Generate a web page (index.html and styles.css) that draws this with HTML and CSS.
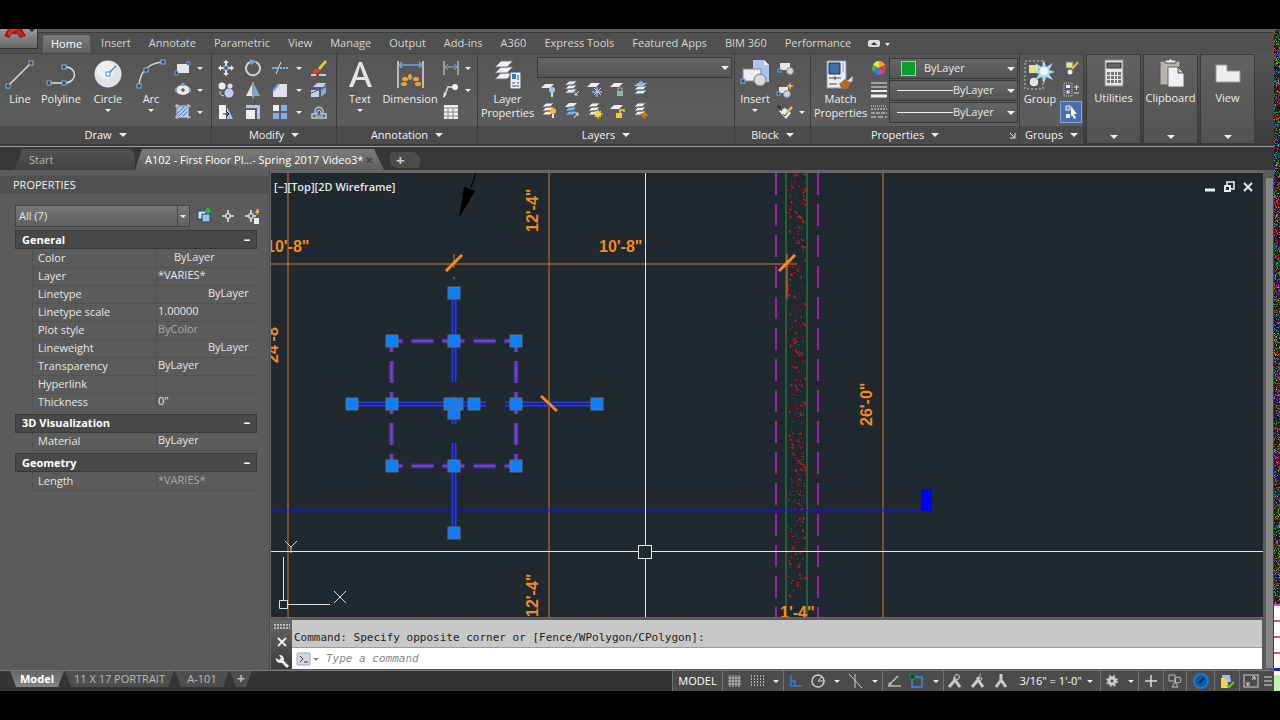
FILE: index.html
```html
<!DOCTYPE html>
<html lang="en">
<head>
<meta charset="utf-8">
<title>A102 - First Floor Plan</title>
<link rel="stylesheet" href="styles.css">
</head>
<body>
<div class="screen">
<div class="app">
  <header class="titlebar">
    <button class="logo" aria-label="Application menu"><svg width="38" height="20" viewBox="0 0 38 20"><path d="M4 7 8 0h14l4 7-6 2-3-4h-5l-3 4z" fill="#a31515"/><path d="M7 6 10 0h8l-5 3-4 4z" fill="#d8322e"/><path d="m19 0 5 6-4 1-4-4z" fill="#cf2525"/><path d="m29 0 3 3 3-3z" fill="#222"/></svg></button>
  </header>
  <nav class="tabs">
    <button class="tab on">Home</button><button class="tab">Insert</button><button class="tab">Annotate</button><button class="tab">Parametric</button><button class="tab">View</button><button class="tab">Manage</button><button class="tab">Output</button><button class="tab">Add-ins</button><button class="tab">A360</button><button class="tab">Express Tools</button><button class="tab">Featured Apps</button><button class="tab">BIM 360</button><button class="tab">Performance</button>
    <button class="mini" aria-label="Minimize ribbon"><svg width="22" height="10" viewBox="0 0 22 10"><rect y="1" width="12" height="7" rx="2" fill="#ddd"/><path d="m3 6 3-3 3 3z" fill="#333"/><path d="M17 4h5l-2.500 3z" fill="#eee"/></svg></button>
  </nav>

  <div class="ribbon">
    <section class="panel draw">
      <div class="tools">
        <button class="big w40"><svg width="34" height="32" viewBox="0 0 34 32"><path d="M5 27 28 4" stroke="#ddd" stroke-width="1.500"/><g fill="#345" stroke="#7fb2f0"><rect x="3" y="25" width="4" height="4"/><rect x="26" y="2" width="4" height="4"/></g></svg><span>Line</span></button>
        <button class="big w42"><svg width="34" height="32" viewBox="0 0 34 32"><path d="M5 24h15c14 0 14-17 0-16" fill="none" stroke="#ddd" stroke-width="1.500"/><g fill="#345" stroke="#7fb2f0"><rect x="3" y="22" width="4" height="4"/><rect x="18" y="22" width="4" height="4"/><rect x="18" y="6" width="4" height="4"/></g></svg><span>Polyline</span></button>
        <button class="big w52"><svg width="34" height="32" viewBox="0 0 34 32"><circle cx="17" cy="15" r="13.500" fill="#dfe2e8"/><circle cx="15" cy="11" r="9" fill="#eceef2"/><path d="m17 15 8-8" stroke="#4a80d0" stroke-width="1.500"/><rect x="15" y="13" width="4" height="4" fill="#fff" stroke="#4a90e8"/></svg><span>Circle</span><i class="arr"></i></button>
        <button class="big w34"><svg width="34" height="32" viewBox="0 0 34 32"><path d="M5 27C6 12 15 4 29 3" fill="none" stroke="#ddd" stroke-width="1.500"/><g fill="#345" stroke="#7fb2f0"><rect x="3" y="25" width="4" height="4"/><rect x="10" y="9" width="4" height="4"/><rect x="27" y="1" width="4" height="4"/></g></svg><span>Arc</span><i class="arr"></i></button>
        <div class="grid g-drop">
          <button class="sm" aria-label="Rectangle"><svg width="18" height="18" viewBox="0 0 18 18"><rect x="3" y="5" width="12" height="9" fill="#e6e7ea"/><path d="M1 12h3v4H1zM13 3h3v3h-3z" fill="#345" stroke="#6fa5e8"/></svg></button><button class="dd" aria-label="Rectangle options"><i class="arr"></i></button>
          <button class="sm" aria-label="Ellipse"><svg width="18" height="18" viewBox="0 0 18 18"><ellipse cx="9" cy="9" rx="7" ry="5" fill="#e6e7ea"/><path d="M7 9h4M9 7v4" stroke="#333"/><path d="M1 9h2M15 9h2M9 2v3" stroke="#6fa5e8" stroke-width="3"/></svg></button><button class="dd" aria-label="Ellipse options"><i class="arr"></i></button>
          <button class="sm" aria-label="Hatch"><svg width="18" height="18" viewBox="0 0 18 18"><rect x="4" y="4" width="10" height="10" fill="#a9c7f2"/><path d="m4 10 6-6M4 14 14 4M8 14l6-6" stroke="#4f7fc8"/><path d="M1 3h16M1 14h16M3 1v15M14 1v15" stroke="#ddd"/></svg></button><button class="dd" aria-label="Hatch options"><i class="arr"></i></button>
        </div>
      </div>
      <button class="ptitle">Draw<i class="arr lg"></i></button>
    </section>

    <section class="panel modify">
      <div class="tools">
        <div class="grid g-mod">
          <button class="sm" aria-label="Move"><svg width="18" height="18" viewBox="0 0 18 18"><path d="m9 1 3 3H6zM9 17l3-3H6zM1 9l3-3v6zM17 9l-3-3v6z" fill="#d5e5fa"/><path d="M9 4v10M4 9h10" stroke="#dce6f5" stroke-width="2"/><rect x="7" y="7" width="4" height="4" fill="#555" stroke="#7fb0f0"/></svg></button>
          <button class="sm" aria-label="Rotate"><svg width="18" height="18" viewBox="0 0 18 18"><path d="M12 3a7 7 0 1 1-6 0" fill="none" stroke="#cfd2d8" stroke-width="2"/><path d="M6 3c2-1 4-1 6 0" stroke="#6fa5e8" stroke-width="2" fill="none"/><path d="m6 0 6 3-5 3z" fill="#6fa5e8"/></svg></button>
          <button class="sm" aria-label="Trim"><svg width="18" height="18" viewBox="0 0 18 18"><path d="M1 9h6" stroke="#6fa5e8" stroke-width="2"/><path d="M9 9h8" stroke="#8fb5e8" stroke-width="2" stroke-dasharray="2 1"/><path d="m5 15 5-12" stroke="#ddd"/></svg></button><button class="dd" aria-label="Trim options"><i class="arr"></i></button>
          <button class="sm" aria-label="Erase"><svg width="18" height="18" viewBox="0 0 18 18"><path d="m8 9 7-8 2 2-7 8z" fill="#f1c33a"/><path d="m6 9 4 3-5 3-3-1z" fill="#e5402a"/><path d="M1 16h5M9 16h7" stroke="#eee" stroke-width="1.500"/></svg></button>
          <button class="sm" aria-label="Copy"><svg width="18" height="18" viewBox="0 0 18 18"><circle cx="5" cy="5" r="3.500" fill="#eee"/><circle cx="12" cy="12" r="4.500" fill="#b9d2f5"/><circle cx="13" cy="5" r="2.500" fill="#ddd"/><path d="M3 10c0 4 1 4 4 5" stroke="#ddd" fill="none"/></svg></button>
          <button class="sm" aria-label="Mirror"><svg width="18" height="18" viewBox="0 0 18 18"><path d="M8 3v12H2z" fill="#e6e7ea"/><path d="M10 3v12h6z" fill="#7fa8dd"/><path d="M9 1v16" stroke="#ddd"/></svg></button>
          <button class="sm" aria-label="Fillet"><svg width="18" height="18" viewBox="0 0 18 18"><path d="M2 16V9l5-6h9v13z" fill="#dfe2e8"/><path d="M2 10 8 3" stroke="#6fa5e8" stroke-width="2"/></svg></button><button class="dd" aria-label="Fillet options"><i class="arr"></i></button>
          <button class="sm" aria-label="Explode"><svg width="18" height="18" viewBox="0 0 18 18"><path d="m3 6 4-4h9l-3 4zM1 9h8v7H1z" fill="#b9d2f5"/><path d="m11 8 5-4v8l-5 4z" fill="#7fa8dd"/><path d="m1 12 15-6" stroke="#555"/></svg></button>
          <button class="sm" aria-label="Stretch"><svg width="18" height="18" viewBox="0 0 18 18"><path d="M2 2h7v14H2z" fill="#f0f1f3"/><path d="m10 4 6 12h-6z" fill="#9fc3f5"/><path d="M6 11h6m-3-3 3 3-3 3" stroke="#222" fill="none"/></svg></button>
          <button class="sm" aria-label="Scale"><svg width="18" height="18" viewBox="0 0 18 18"><path d="M2 2h14v14h-3V5H2z" fill="#a9c7f2"/><rect x="2" y="7" width="9" height="9" fill="#eee"/></svg></button>
          <button class="sm" aria-label="Array"><svg width="18" height="18" viewBox="0 0 18 18"><rect x="2" y="2" width="6" height="6" fill="#eee"/><path d="M10 2h6v6h-6zM2 10h6v6H2zM10 10h6v6h-6z" fill="#7fb0f0"/></svg></button><button class="dd" aria-label="Array options"><i class="arr"></i></button>
          <button class="sm" aria-label="Offset"><svg width="18" height="18" viewBox="0 0 18 18"><path d="M2 15v-4h4a4 4 0 1 1 6 0h4v4z" fill="none" stroke="#a9c7f2" stroke-width="1.500"/><path d="M5 13h8M8 11a2 2 0 1 1 2 0" fill="none" stroke="#ddd"/></svg></button>
        </div>
      </div>
      <button class="ptitle">Modify<i class="arr lg"></i></button>
    </section>

    <section class="panel annot">
      <div class="tools">
        <button class="big w38"><svg width="34" height="32" viewBox="0 0 34 32"><path d="M6 28 16 3h3l10 25h-4l-3-7h-9l-3 7zm8-10h7L17 7z" fill="#e4e4e4"/></svg><span>Text</span><i class="arr"></i></button>
        <button class="big w62"><svg width="34" height="32" viewBox="0 0 34 32"><path d="M5 2v27M30 2v27" stroke="#ddd" stroke-width="1.500"/><path d="M6 6h23M9 3 6 6l3 3M26 3l3 3-3 3" fill="none" stroke="#6fa5e8" stroke-width="1.500"/><g fill="#efa532"><ellipse cx="12" cy="20" rx="3" ry="2"/><ellipse cx="17" cy="18" rx="2" ry="3"/><ellipse cx="23" cy="20" rx="3" ry="2"/><ellipse cx="11" cy="25" rx="3" ry="2"/><ellipse cx="25" cy="25" rx="3" ry="2"/></g></svg><span>Dimension</span></button>
        <div class="grid g-drop">
          <button class="sm" aria-label="Linear dimension"><svg width="18" height="18" viewBox="0 0 18 18"><path d="M2 2v14M16 2v14" stroke="#ddd"/><path d="M3 8h12M6 5 3 8l3 3M12 5l3 3-3 3" stroke="#7fb0f0" fill="none"/></svg></button><button class="dd" aria-label="Dimension options"><i class="arr"></i></button>
          <button class="sm" aria-label="Leader"><svg width="18" height="18" viewBox="0 0 18 18"><path d="m2 16 4-10h7" stroke="#ddd" fill="none" stroke-width="1.500"/><path d="m1 17 1-6 3 2z" fill="#ddd"/><circle cx="13" cy="6" r="3" fill="#eee"/></svg></button><button class="dd" aria-label="Leader options"><i class="arr"></i></button>
          <button class="sm" aria-label="Table"><svg width="18" height="18" viewBox="0 0 18 18"><path d="M2 2h14v14H2z" fill="#eee"/><path d="M2 5h14M2 9h14M2 13h14M6 5v11M11 5v11" stroke="#888"/></svg></button>
        </div>
      </div>
      <button class="ptitle">Annotation<i class="arr lg"></i></button>
    </section>

    <section class="panel layers">
      <div class="tools">
        <button class="big w58"><svg width="34" height="32" viewBox="0 0 34 32"><g fill="#f0f1f3" stroke="#777" stroke-width="1"><path d="m10 14-6 6h12l6-6z"/><path d="m10 8-6 6h12l6-6z"/><path d="m10 2-6 6h12l6-6z"/></g><rect x="19" y="13" width="11" height="17" fill="#e9eef5" stroke="#456"/><path d="M21 15h4v5h-4z" fill="#3d75c4"/><path d="M27 16v5M21 24h3M26 24h2M21 27h7" stroke="#456"/></svg><span>Layer<br>Properties</span></button>
        <div class="stack">
          <span class="combo wide"><select aria-label="Layer"><option></option></select></span>
          <div class="lrow">
            <button class="sm" aria-label="Layer off"><svg width="18" height="18" viewBox="0 0 18 18"><path d="m5 4-4 4h9l4-4z" fill="#eee"/><circle cx="12" cy="10" r="3" fill="#9fc3f5"/><path d="M12 13v4" stroke="#ddd" stroke-width="2"/></svg></button>
            <button class="sm" aria-label="Isolate"><svg width="18" height="18" viewBox="0 0 18 18"><path d="m6 1-4 4h8l4-4zM6 5 2 9h8l4-4zM6 9l-4 4h8l4-4z" fill="#e9edf3" stroke="#578"/><path d="m16 11-4 4v-3m0 3h3" stroke="#ddd" fill="none"/></svg></button>
            <button class="sm" aria-label="Freeze"><svg width="18" height="18" viewBox="0 0 18 18"><path d="m5 3-4 4h9l4-4z" fill="#eee"/><path d="M11 7v10M6 12h10M8 8l7 7M15 8l-7 7" stroke="#b9dcff"/></svg></button>
            <button class="sm" aria-label="Lock"><svg width="18" height="18" viewBox="0 0 18 18"><path d="m5 3-4 4h9l4-4z" fill="#eee"/><path d="M9 11V8h4v3" stroke="#aaa" fill="none"/><rect x="8" y="11" width="6" height="5" fill="#8fb5b5"/></svg></button>
            <button class="sm" aria-label="Make current"><svg width="18" height="18" viewBox="0 0 18 18"><path d="m6 10-4 4h9l4-4zM6 6l-4 4h9l4-4z" fill="#e9edf3" stroke="#467"/><path d="m6 3-4 3h9l4-3z" fill="#9fc3f5"/><circle cx="9" cy="3" r="2" fill="#7fb0f0"/></svg></button>
          </div>
          <div class="lrow">
            <button class="sm" aria-label="Layers on"><svg width="18" height="18" viewBox="0 0 18 18"><path d="m6 1-4 4h8l4-4zM6 5 2 9h8l4-4zM6 9l-4 4h8l4-4z" fill="#eee" stroke="#666"/><circle cx="13" cy="9" r="3" fill="#ffb43c"/><path d="M13 12v4" stroke="#ddd" stroke-width="2"/></svg></button>
            <button class="sm" aria-label="Unisolate"><svg width="18" height="18" viewBox="0 0 18 18"><path d="m6 1-4 4h8l4-4z" fill="#eee"/><path d="m6 5-4 4h8l4-4zM6 9l-4 4h8l4-4z" fill="#78aef2" stroke="#467"/><path d="m11 16 4-5v3m0-3h-3" stroke="#eee" fill="none"/></svg></button>
            <button class="sm" aria-label="Thaw"><svg width="18" height="18" viewBox="0 0 18 18"><path d="m6 1-4 4h8l4-4zM6 5 2 9h8l4-4zM6 9l-4 4h8l4-4z" fill="#eee" stroke="#666"/><circle cx="12" cy="12" r="3" fill="#ffe04a"/><path d="M12 7v10M7 12h10M9 9l6 6M15 9l-6 6" stroke="#ffd030"/></svg></button>
            <button class="sm" aria-label="Unlock"><svg width="18" height="18" viewBox="0 0 18 18"><path d="m5 3-4 4h9l4-4z" fill="#eee"/><path d="M11 11V8h4v2" stroke="#ffca28" stroke-width="1.500" fill="none"/><rect x="7" y="11" width="6" height="5" fill="#ffca28"/></svg></button>
            <button class="sm" aria-label="Match layer"><svg width="18" height="18" viewBox="0 0 18 18"><path d="m6 1-4 4h8l4-4zM6 5 2 9h8l4-4zM6 9l-4 4h8l4-4z" fill="#eee" stroke="#666"/><path d="m8 12 5-2 3 3-4 4z" fill="#c8761c"/></svg></button>
          </div>
        </div>
      </div>
      <button class="ptitle">Layers<i class="arr lg"></i></button>
    </section>

    <section class="panel block">
      <div class="tools">
        <button class="big w40"><svg width="34" height="32" viewBox="0 0 34 32"><path d="M15 1h11l5 5v17H15z" fill="#a9c7ee"/><path d="m26 1 5 5h-5z" fill="#eef"/><rect x="5" y="10" width="18" height="12" fill="#eceef2" stroke="#888"/><circle cx="22" cy="21" r="6" fill="#d5d8dd" stroke="#777"/><rect x="3" y="20" width="4" height="4" fill="#345" stroke="#7fb2f0"/></svg><span>Insert</span><i class="arr"></i></button>
        <div class="grid g-drop">
          <button class="sm" aria-label="Create block"><svg width="18" height="18" viewBox="0 0 18 18"><rect x="4" y="4" width="10" height="7" fill="#e6e7ea"/><circle cx="14" cy="12" r="3.500" fill="#cfd2d8" stroke="#888"/><rect x="2" y="10" width="3" height="3" fill="#345" stroke="#6fa5e8"/></svg></button><span class="dd"></span>
          <button class="sm" aria-label="Edit block"><svg width="18" height="18" viewBox="0 0 18 18"><rect x="3" y="6" width="9" height="6" fill="#e6e7ea"/><circle cx="11" cy="13" r="3.500" fill="#cfd2d8" stroke="#888"/><rect x="1" y="11" width="3" height="3" fill="#345" stroke="#6fa5e8"/><path d="m14 1 1 3 3 1-3 1-1 3-1-3-3-1 3-1z" fill="#ffb43c"/></svg></button><span class="dd"></span>
          <button class="sm" aria-label="Edit attributes"><svg width="18" height="18" viewBox="0 0 18 18"><path d="m3 8 6-3 6 5-5 6z" fill="#eee"/><path d="M1 4h4M2 2l4 6" stroke="#222"/><path d="m7 11 2 2 6-8" stroke="#333" fill="none"/><path d="m10 9 5-6 2 2-6 6z" fill="#f3b04a"/></svg></button><button class="dd" aria-label="Attribute options"><i class="arr"></i></button>
        </div>
      </div>
      <button class="ptitle">Block<i class="arr lg"></i></button>
    </section>

    <section class="panel props">
      <div class="tools">
        <button class="big w58"><svg width="34" height="32" viewBox="0 0 34 32"><rect x="3" y="2" width="19" height="27" fill="#e9eef5" stroke="#89a"/><path d="M5 4h11v11H5z" fill="#3c6fa8" stroke="#234"/><path d="M19 4v9" stroke="#89a"/><path d="M5 19h12M11 17v4M5 25h8" stroke="#444"/><path d="m15 25 6-5 6 3-3 6-6 1z" fill="#b9691b"/><path d="m23 22 6-5-1 6z" fill="#ddd"/></svg><span>Match<br>Properties</span></button>
        <div class="pgrid">
          <svg width="18" height="18" viewBox="0 0 18 18"><path d="M9 9V2a7 7 0 0 1 6 4z" fill="#f5a030"/><path d="M9 9 15 6a7 7 0 0 1 0 7z" fill="#e04030"/><path d="m9 9 6 4a7 7 0 0 1-6 3z" fill="#b04fc0"/><path d="M9 9v7a7 7 0 0 1-6-3z" fill="#3f6fe0"/><path d="m9 9-6 4a7 7 0 0 1 0-7z" fill="#35b06a"/><path d="M9 9 3 6a7 7 0 0 1 6-4z" fill="#f3e04a"/></svg>
          <span class="combo color"><i class="swatch"></i><select aria-label="Object color"><option>ByLayer</option></select></span>
          <svg width="18" height="18" viewBox="0 0 18 18"><path d="M1 2h16M1 6h16" stroke="#eee"/><path d="M1 10h16" stroke="#eee" stroke-width="2"/><path d="M1 15h16" stroke="#eee" stroke-width="3"/></svg>
          <span class="combo"><i class="sample"></i><select aria-label="Lineweight"><option>ByLayer</option></select></span>
          <svg width="18" height="18" viewBox="0 0 18 18"><g stroke="#ddd"><path d="M1 3h16" stroke-dasharray="1 1"/><path d="M1 6h16" stroke-dasharray="2 1"/><path d="M1 10h16" stroke-dasharray="4 1"/><path d="M1 14h16" stroke-dasharray="5 2"/></g></svg>
          <span class="combo"><i class="sample"></i><select aria-label="Linetype"><option>ByLayer</option></select></span>
        </div>
      </div>
      <div class="ptitle"><button class="pbtn">Properties<i class="arr lg"></i></button><button class="launch" aria-label="Open properties palette"><svg width="7" height="7" viewBox="0 0 7 7"><path d="m1 1 4 4M6 1v5H1" stroke="#eee" fill="none"/></svg></button></div>
    </section>

    <section class="panel groups">
      <div class="tools">
        <button class="big w40"><svg width="34" height="32" viewBox="0 0 34 32"><rect x="2" y="2" width="18" height="28" fill="none" stroke="#ccc" stroke-dasharray="2 2"/><rect x="6" y="6" width="9" height="8" fill="#e8e48a"/><circle cx="11" cy="23" r="5" fill="#dfe2e8" stroke="#333"/><path d="m21 1 2 7 7-4-4 7 6 2-6 2 4 6-7-3-2 7-2-7-7 3 4-6-6-2 6-2-4-7 7 4z" fill="#a8dcff"/><circle cx="21" cy="12" r="4" fill="#f2faff"/></svg><span>Group</span></button>
        <div class="gcol">
          <button class="sm" aria-label="Ungroup"><svg width="18" height="18" viewBox="0 0 18 18"><rect x="4" y="3" width="7" height="6" fill="#e8e48a" stroke="#777"/><circle cx="8" cy="13" r="2.500" fill="#eee"/><path d="m10 10 6-7" stroke="#e8b84a" stroke-width="2"/></svg></button>
          <button class="sm" aria-label="Group edit"><svg width="18" height="18" viewBox="0 0 18 18"><rect x="2" y="2" width="8" height="13" fill="none" stroke="#ccc" stroke-dasharray="1 1"/><rect x="4" y="4" width="4" height="3" fill="#eee"/><circle cx="6" cy="11" r="2" fill="#a9c7f2"/><path d="M12 6h5M14.500 4v5M12 12h5" stroke="#ddd"/></svg></button>
          <button class="sm pressed" aria-label="Group selection"><svg width="18" height="18" viewBox="0 0 18 18"><rect x="4" y="3" width="4" height="4" fill="#6a8f8f" stroke="#eef"/><rect x="4" y="11" width="4" height="4" fill="#eee"/><path d="m9 3 6 8h-3l2 4-2 1-2-4-1 2z" fill="#f5f3c8"/></svg></button>
        </div>
      </div>
      <button class="ptitle">Groups<i class="arr lg"></i></button>
    </section>

    <button class="fold"><svg width="34" height="32" viewBox="0 0 34 32"><rect x="8" y="2" width="18" height="26" fill="#e6e6e6" stroke="#888"/><rect x="10" y="5" width="14" height="5" fill="#666" stroke="#333"/><path d="M10 14h3v3h-3zM14 14h3v3h-3zM18 14h2v3h-2zM21 14h3v3h-3zM10 18h3v3h-3zM14 18h3v3h-3zM18 18h2v3h-2zM21 18h3v3h-3zM10 22h3v3h-3zM14 22h3v3h-3zM18 22h2v3h-2zM21 22h3v3h-3z" fill="#777"/></svg><span>Utilities</span><i class="arr lg"></i></button>
    <button class="fold"><svg width="34" height="32" viewBox="0 0 34 32"><rect x="6" y="3" width="20" height="24" fill="#b9b4a8" stroke="#555"/><path d="M11 5V2h4l1-2 2 2h4v3z" fill="#eee" stroke="#555"/><path d="M14 9h10l6 5v15H14z" fill="#f0f0f2" stroke="#666"/><path d="M24 9v6h6z" fill="#ccc" stroke="#444"/></svg><span>Clipboard</span><i class="arr lg"></i></button>
    <button class="fold"><svg width="34" height="32" viewBox="0 0 34 32"><path d="M5 7h11v6h13v11H5z" fill="#eeeef0" stroke="#999"/></svg><span>View</span><i class="arr lg"></i></button>
  </div>

  <nav class="docs">
    <button class="doc">Start</button>
    <button class="doc on"><span>A102 - First Floor Pl...- Spring 2017 Video3*</span><b>✕</b></button>
    <button class="doc new" aria-label="New drawing">+</button>
  </nav>

  <div class="work">
    <aside class="palette">
      <h2>PROPERTIES</h2>
      <div class="pick">
        <span class="combo sel"><select aria-label="Selection"><option>All (7)</option></select></span>
        <button class="sm" aria-label="Toggle PICKADD"><svg width="18" height="18" viewBox="0 0 18 18"><rect x="2" y="4" width="8" height="8" fill="#cfe0f5" stroke="#246"/><rect x="6" y="7" width="8" height="8" fill="#9fc0ea" stroke="#246"/><path d="M12 1v6M9 4h6" stroke="#22c02a" stroke-width="2"/></svg></button>
        <button class="sm" aria-label="Select objects"><svg width="18" height="18" viewBox="0 0 18 18"><path d="M8 3v4M8 11v4M2 9h4M10 9h4" stroke="#eee" stroke-width="1.500"/><rect x="6" y="7" width="4" height="4" fill="none" stroke="#eee"/></svg></button>
        <button class="sm" aria-label="Quick select"><svg width="18" height="18" viewBox="0 0 18 18"><path d="M7 3v4M7 11v4M1 9h4M9 9h3" stroke="#eee" stroke-width="1.500"/><rect x="5" y="7" width="4" height="4" fill="none" stroke="#eee"/><path d="m13 2-2 4h2l-1 3 4-5h-2l1-2z" fill="#ffb43c"/><rect x="10" y="11" width="5" height="6" fill="#eee"/></svg></button>
      </div>
      <section class="group">
        <button class="ghead">General<b>−</b></button>
        <table>
          <tr><th>Color</th><td class="in1">ByLayer</td></tr>
          <tr><th>Layer</th><td>*VARIES*</td></tr>
          <tr><th>Linetype</th><td class="in2">ByLayer</td></tr>
          <tr><th>Linetype scale</th><td>1.00000</td></tr>
          <tr><th>Plot style</th><td class="dim">ByColor</td></tr>
          <tr><th>Lineweight</th><td class="in2">ByLayer</td></tr>
          <tr><th>Transparency</th><td>ByLayer</td></tr>
          <tr><th>Hyperlink</th><td></td></tr>
          <tr><th>Thickness</th><td>0"</td></tr>
        </table>
      </section>
      <section class="group">
        <button class="ghead">3D Visualization<b>−</b></button>
        <table><tr><th>Material</th><td>ByLayer</td></tr></table>
      </section>
      <section class="group">
        <button class="ghead">Geometry<b>−</b></button>
        <table><tr><th>Length</th><td class="dim">*VARIES*</td></tr></table>
      </section>
    </aside>

    <main class="view">
      <div class="viewport">
        <svg class="drawing" width="100%" height="100%">
          <g transform="translate(-271 -173)">
            <path class="dimline" d="M288 173v3000M549 173v3000M883 173v3000M271 264h526M454 254v14M454 277v2"/>
            <g class="footing"><path d="M776 173v3000"/><path d="M818 173v3000"/></g>
            <path d="M786 173v3000M807 173v3000" stroke="#209a44" fill="none"/>
            <g id="concrete" fill="#d01820"></g>
            <path d="M787 254v45" stroke="#d9822a"/>
            <path d="M476 173l-5 15" stroke="#000"/><path d="m459 218 5-31 11 4z" fill="#000"/>
            <rect x="271" y="510" width="651" height="1" fill="#1616c4"/><rect x="921" y="489" width="11" height="22" fill="#0000ff"/>
            <g class="dimtext">
              <text x="266" y="252">10'-8"</text><text x="599" y="252">10'-8"</text>
              <text transform="translate(538 232) rotate(-90)">12'-4"</text>
              <text transform="translate(538 617) rotate(-90)">12'-4"</text>
              <text transform="translate(278 363) rotate(-90)">24'-8"</text>
              <text transform="translate(872 426) rotate(-90)">26'-0"</text>
              <text x="780" y="618">1'-4"</text>
            </g>
            <g class="outline glow"><path d="M391.500 341H516"/><path d="M391.500 466H516"/><path d="M391.500 341v125"/><path d="M516 341v125"/></g>
            <g class="outline"><path d="M391.500 341H516"/><path d="M391.500 466H516"/><path d="M391.500 341v125"/><path d="M516 341v125"/></g>
            <path d="M454 293v89M454 404v20M454 443v90M352 404h134M505 404h92" stroke="#2440c8" stroke-width="5"/>
            <path d="M454 293v89M454 404v20M454 443v90M352 404h134M505 404h92" stroke="#1c1cae" stroke-width="2"/>
            <path d="m446 271 16-16M779 271l16-16M541 396l16 15" stroke="#f58a1f" stroke-width="3"/>
            <g fill="#0a80ff" stroke="#66707c">
              <rect x="448" y="287" width="12" height="12"/><rect x="386" y="335" width="12" height="12"/><rect x="448" y="335" width="12" height="12"/><rect x="510" y="335" width="12" height="12"/>
              <rect x="346" y="398" width="12" height="12"/><rect x="386" y="398" width="12" height="12"/><rect x="451" y="398" width="12" height="12"/><rect x="444" y="398" width="12" height="12"/><rect x="468" y="398" width="12" height="12"/><rect x="510" y="398" width="12" height="12"/><rect x="591" y="398" width="12" height="12"/><rect x="448" y="407" width="12" height="12"/>
              <rect x="386" y="460" width="12" height="12"/><rect x="448" y="460" width="12" height="12"/><rect x="510" y="460" width="12" height="12"/><rect x="448" y="527" width="12" height="12"/>
            </g>
            <path d="M271 551.500h3000M645.500 173v3000" stroke="#e2e6e8"/>
            <rect x="638.500" y="545.500" width="13" height="13" fill="#202830" stroke="#e4e8ea"/>
            <path d="M283.500 557v43M288 604.500h42M279.500 600.500h8v8h-8zM285 541l6 6 6-6M291 547v6M334 591l12 12M346 591l-12 12" fill="none" stroke="#d8dde0"/>
          </g>
        </svg>
        <div class="vhead"><span>[−][Top][2D Wireframe]</span>
          <span class="wins"><button aria-label="Minimize"><svg width="12" height="12" viewBox="0 0 12 12"><path d="M1 9h10" stroke="#eee" stroke-width="3"/></svg></button><button aria-label="Restore"><svg width="12" height="12" viewBox="0 0 12 12"><path d="M4 4V1h7v7H8" fill="none" stroke="#eee" stroke-width="1.500"/><rect x="2" y="5" width="5" height="5" fill="none" stroke="#eee" stroke-width="2"/></svg></button><button aria-label="Close"><svg width="12" height="12" viewBox="0 0 12 12"><path d="m2 2 8 8M10 2l-8 8" stroke="#eee" stroke-width="2"/></svg></button></span>
        </div>
      </div>
      <div class="cmd">
        <div class="grip">
          <svg width="18" height="6" viewBox="0 0 18 6"><path d="M1 1h16M1 4h16" stroke="#bbb" stroke-width="2" stroke-dasharray="2 1"/></svg>
          <button aria-label="Close command line"><svg width="12" height="12" viewBox="0 0 12 12"><path d="m2 2 8 8M10 2l-8 8" stroke="#eee" stroke-width="2"/></svg></button>
          <button aria-label="Customize"><svg width="14" height="14" viewBox="0 0 14 14"><path d="m6 6 7 7" stroke="#eee" stroke-width="3"/><path d="M4 1a4 4 0 1 1-3 3l3 2 2-2z" fill="#eee"/></svg></button>
        </div>
        <div class="lines">
          <div class="hist">Command: Specify opposite corner or [Fence/WPolygon/CPolygon]:</div>
          <label class="prompt"><svg width="24" height="14" viewBox="0 0 24 14"><rect x="1" y="1" width="13" height="12" rx="1" fill="#d5d8e0" stroke="#9aa"/><path d="m4 4 3 3-3 3M8 10h4" fill="none" stroke="#334"/><path d="M17 6h6l-3 3z" fill="#888"/></svg><input type="text" placeholder="Type a command" aria-label="Command"></label>
        </div>
      </div>
    </main>
    <div class="rail"></div>
  </div>

  <footer class="status">
    <nav class="sheets"><button class="sheet on">Model</button><button class="sheet">11 X 17 PORTRAIT</button><button class="sheet">A-101</button><button class="sheet plus" aria-label="New layout">+</button></nav>
    <div class="toggles">
      <button class="model">MODEL</button>
      <button class="st sep" aria-label="Grid"><svg width="16" height="16" viewBox="0 0 16 16"><path d="M4 2v12M7 2v12M10 2v12M13 2v12M2 5h13M2 8h13M2 11h13" stroke="#bbb"/></svg></button>
      <button class="st" aria-label="Snap"><svg width="16" height="16" viewBox="0 0 16 16"><path d="M2 3h13M2 6h13M2 9h13M2 12h13" stroke="#ddd" stroke-width="1.500" stroke-dasharray="1 2"/></svg></button>
      <button class="sa" aria-label="Snap options"><i class="arr"></i></button>
      <button class="st sep" aria-label="Ortho"><svg width="16" height="16" viewBox="0 0 16 16"><path d="M4 2v11h11M4 8h4v5" fill="none" stroke="#2f7fe0" stroke-width="1.500"/></svg></button>
      <button class="st" aria-label="Polar tracking"><svg width="16" height="16" viewBox="0 0 16 16"><circle cx="8" cy="8" r="6" fill="none" stroke="#ccc" stroke-width="1.500"/><path d="M8 8h7M8 8l4-4" stroke="#ccc"/></svg></button>
      <button class="sa" aria-label="Polar options"><i class="arr"></i></button>
      <button class="st" aria-label="Isometric"><svg width="16" height="16" viewBox="0 0 16 16"><path d="m1 1 13 14M7 1v14" stroke="#ccc"/></svg></button>
      <button class="sa" aria-label="Isometric options"><i class="arr"></i></button>
      <button class="st sep" aria-label="Object snap tracking"><svg width="16" height="16" viewBox="0 0 16 16"><path d="M2 13h13M4 11l8-8" stroke="#bbb" stroke-width="1.500"/><path d="m2 13 1-4 3 3z" fill="#bbb"/></svg></button>
      <button class="st" aria-label="Object snap"><svg width="16" height="16" viewBox="0 0 16 16"><rect x="3" y="4" width="10" height="10" fill="none" stroke="#2f8bf0" stroke-width="1.500"/><rect x="1" y="1" width="5" height="5" fill="#184a28" stroke="#1b8a3c"/></svg></button>
      <button class="sa" aria-label="Object snap options"><i class="arr"></i></button>
      <button class="st sep" aria-label="Annotation visibility"><svg width="16" height="16" viewBox="0 0 16 16"><path d="M8 4v4M8 7l-6 7M8 7l5 7" stroke="#ccc" stroke-width="3"/><circle cx="10" cy="4" r="2.500" fill="#555" stroke="#ccc"/></svg></button>
      <button class="st" aria-label="Auto scale"><svg width="16" height="16" viewBox="0 0 16 16"><path d="M8 4v4M8 7l-6 7M8 7l5 7" stroke="#ccc" stroke-width="3"/><path d="m11 1-3 4h4l-2 4" fill="none" stroke="#ccc"/></svg></button>
      <button class="st" aria-label="Annotation scale"><svg width="16" height="16" viewBox="0 0 16 16"><path d="M8 1v7M8 7l-5 7M8 7l5 7" stroke="#ccc" stroke-width="3"/></svg></button>
      <button class="scale">3/16" = 1'-0"<i class="arr"></i></button>
      <button class="st sep" aria-label="Workspace"><svg width="16" height="16" viewBox="0 0 16 16"><circle cx="8" cy="8" r="5" fill="none" stroke="#bbb" stroke-width="2" stroke-dasharray="2 2"/><circle cx="8" cy="8" r="3" fill="none" stroke="#ccc" stroke-width="3"/></svg></button>
      <button class="sa" aria-label="Workspace options"><i class="arr"></i></button>
      <button class="st sep roomy" aria-label="Annotation monitor"><svg width="16" height="16" viewBox="0 0 16 16"><path d="M8 2v12M2 8h12" stroke="#ddd" stroke-width="1.500"/></svg></button>
      <button class="st sep" aria-label="Isolate objects"><svg width="16" height="16" viewBox="0 0 16 16"><path d="M2 2h6v6H2zM5 14l3-5 3 5z" fill="none" stroke="#bbb"/><circle cx="11" cy="7" r="3" fill="none" stroke="#bbb"/></svg></button>
      <button class="st sep wide" aria-label="Graphics performance"><svg width="18" height="18" viewBox="0 0 18 18"><circle cx="9" cy="9" r="7" fill="#1558a8" stroke="#1f78d8" stroke-width="2"/><path d="m7 11 5-5" stroke="#0c2b50" stroke-width="2"/></svg></button>
      <button class="st sep roomy" aria-label="Notifications"><svg width="16" height="16" viewBox="0 0 16 16"><path d="M3 2h8l1 7H4z" fill="#9fc3e8"/><path d="M2 5h3l4 5v5H2z" fill="#e8d84a"/><path d="m8 12 2 2 5-5" stroke="#5fc030" stroke-width="2" fill="none"/></svg></button>
      <button class="st sep" aria-label="Clean screen"><svg width="16" height="16" viewBox="0 0 16 16"><rect x="1" y="2" width="14" height="12" fill="none" stroke="#ccc"/><path d="M9 7l3-3M9 4h3v3M7 9l-3 3M4 9v3h3" stroke="#ddd" fill="none"/></svg></button>
      <button class="st last" aria-label="Customization"><svg width="8" height="14" viewBox="0 0 8 14"><path d="M0 3h8M0 7h8M0 11h8" stroke="#ddd"/></svg></button>
    </div>
  </footer>
</div>
<canvas class="edge" id="edge" width="6" height="662"></canvas>
</div>
<script src="script.js"></script>
</body>
</html>
```
FILE: styles.css
```css
* { box-sizing: border-box; }
body {
  margin: 0;
  background: #000;
  color: #e6e6e6;
  font: 11px/14px "Open Sans", "Noto Sans", sans-serif;
}
button, select, input { font: inherit; color: inherit; }
button { background: none; border: 0; padding: 0; margin: 0; }
svg { display: block; flex: none; }
.screen { height: 100vh; padding: 29px 0; display: flex; overflow: hidden; }
.app { flex: 1; min-width: 0; display: flex; flex-direction: column; background: #5b5b5b; }
.edge { width: 6px; height: 100%; flex: none; }

.arr { display: inline-block; border: 3px solid transparent; border-top: 3px solid #eee; border-bottom: 0; }
.arr.lg { border-width: 4px 4px 0; }

.titlebar { height: 4px; background: #5e5e5e; border-bottom: 1px solid #3b3b3b; position: relative; flex: none; }
.logo { position: absolute; left: 0; top: 0; width: 38px; height: 20px; background: linear-gradient(#9a9a9a, #666); border: 1px solid #333; border-width: 0 1px 1px 0; overflow: hidden; z-index: 1; }
.tabs { height: 20px; flex: none; display: flex; align-items: flex-end; gap: 4px; padding-left: 43px; background: #505050; }
.tab { height: 18px; padding: 0 7px 2px; color: #d6d6d6; }
.tab.on { background: linear-gradient(#7b7b7b, #5e5e5e); color: #fff; border: 1px solid #6f6f6f; border-bottom: 0; padding: 0 7px 2px; }
.mini { margin-left: 6px; height: 18px; }

.ribbon { height: 93px; flex: none; display: flex; background: linear-gradient(#545454, #3d3d3d); border-bottom: 2px solid #3b3b3b; box-shadow: 0 1px #a0a0a0; }
.panel { display: flex; flex-direction: column; flex: none; background: linear-gradient(#555, #606060); border-right: 1px solid #3e3e3e; border-top: 1px solid #454545; }
.tools { flex: 1; display: flex; align-items: flex-start; padding-top: 3px; }
.ptitle { height: 18px; background: #4b4b4b; display: flex; align-items: center; justify-content: center; gap: 7px; color: #f2f2f2; flex: none; }
.pbtn { flex: 1; display: flex; align-items: center; justify-content: center; gap: 7px; }
.launch { padding: 0 3px; }
.draw { width: 212px; }
.modify { width: 125px; }
.annot { width: 141px; }
.layers { width: 257px; }
.block { width: 76px; }
.props { width: 209px; }
.groups { width: 64px; }
.annot .tools { padding-left: 4px; }

.big { display: flex; flex-direction: column; align-items: center; flex: none; padding-top: 2px; }
.big span, .fold span { margin-top: 1px; color: #eee; text-align: center; }
.big .arr { margin-top: 3px; }
.w34 { width: 34px; } .w38 { width: 38px; } .w40 { width: 40px; } .w42 { width: 42px; }
.w52 { width: 52px; } .w58 { width: 59px; } .w62 { width: 62px; }
.grid { display: grid; grid-auto-rows: 22px; justify-items: center; align-items: center; }
.g-drop { grid-template-columns: 20px 14px; margin-left: 5px; }
.annot .g-drop { margin-left: 0; }
.block .g-drop { margin-left: 0; }
.g-mod { grid-template-columns: 27px 27px 27px 11px 29px; }
.sm, .dd { display: flex; align-items: center; justify-content: center; }
.stack { flex: 1; }
.lrow { display: flex; height: 22px; align-items: center; gap: 5px; padding-left: 3px; }
.combo { display: flex; align-items: center; height: 21px; position: relative; border: 1px solid #393939; background: linear-gradient(#656565, #555); }
.combo::after { content: ""; position: absolute; right: 2px; top: 8px; border: 4px solid transparent; border-top-color: #eee; border-bottom: 0; pointer-events: none; }
.combo select { appearance: none; background: none; border: 0; padding: 0; flex: 1; min-width: 0; height: 100%; outline: 0; }
.combo.wide { margin-right: 2px; }
.pgrid { flex: 1; display: grid; grid-template-columns: 18px 1fr; grid-auto-rows: 22px; align-items: center; padding-right: 1px; column-gap: 1px; }
.swatch { width: 15px; height: 15px; background: #0aa02a; border: 1px solid #9fcfa5; margin: 0 8px 0 11px; }
.sample { width: 56px; height: 1px; background: #eee; margin: 0 0 0 7px; }
.gcol { display: grid; grid-auto-rows: 22px; grid-template-columns: 22px; }
.pressed { background: #4a6fae; border: 1px solid #7fa4dc; }
.fold { width: 55px; margin: 1px 0 0 2px; height: 90px; flex: none; display: flex; flex-direction: column; align-items: center; padding-top: 3px; background: linear-gradient(#626262, #525252); border: 1px solid #3a3a3a; }
.fold .arr { margin: auto 0 4px; }

.docs { height: 23px; margin-top: 1px; flex: none; display: flex; align-items: flex-end; background: #373737; padding-left: 14px; }
.doc { height: 21px; background: linear-gradient(#525252, #434343); color: #b4b4b4; border-radius: 8px 8px 0 0; text-align: left; padding: 0 0 0 15px; width: 121px; clip-path: polygon(9px 0, 100% 0, 100% 100%, 0 100%); }
.doc.on { width: 249px; padding: 0 11px 0 10px; display: flex; align-items: center; justify-content: space-between; background: linear-gradient(#7d7d7d, #5c5c5c); color: #fff; clip-path: polygon(7px 0, 96% 0, 100% 100%, 0 100%); }
.doc b { color: #444; font-size: 10px; }
.doc.new { width: 30px; height: 16px; margin: 0 0 2px 6px; padding: 0 0 0 6px; font-size: 15px; font-weight: bold; color: #ccc; background: #4c4c4c; border-radius: 4px 8px 4px 8px; clip-path: none; }

.work { flex: 1; min-height: 0; display: flex; }
.palette { width: 270px; flex: none; padding-top: 6px; border-right: 1px solid #4c4c4c; }
.palette h2 { margin: 0; height: 18px; line-height: 18px; padding-left: 13px; background: #515151; font-size: 11px; font-weight: normal; color: #eee; }
.pick { display: flex; align-items: center; gap: 6px; padding: 11px 0 3px 15px; }
.combo.sel { width: 175px; height: 22px; border-color: #444; background: linear-gradient(90deg, transparent 166px, #444 166px, #444 167px, transparent 167px), linear-gradient(#777, #606060); }
.combo.sel { background: linear-gradient(90deg, transparent 161px, #444 161px, #444 162px, transparent 162px), linear-gradient(#777, #606060); }
.combo.sel::after { border-width: 3px 3px 0; top: 9px; right: 3px; }
.combo.sel select { padding-left: 3px; }
.group { margin: 0 12px 2px 15px; }
.ghead { width: 100%; height: 19px; padding: 0 6px; display: flex; align-items: center; justify-content: space-between; background: #484848; border: 1px solid #3a3a3a; font-weight: bold; color: #fff; }
table { width: 226px; margin-left: 17px; border-collapse: collapse; border-left: 1px solid #525252; table-layout: fixed; }
th, td { height: 18px; padding: 0 0 0 5px; border-bottom: 1px solid #525252; font-weight: normal; text-align: left; line-height: 14px; }
th { width: 124px; }
td { padding: 0 0 2px 1px; border-left: 1px solid #525252; }
.in1 { padding-left: 17px; } .in2 { padding-left: 51px; } .dim { color: #a8a8a8; }

.view { flex: 1; min-width: 0; display: flex; flex-direction: column; background: #666; padding: 3px 0 0 1px; }
.viewport { flex: 1; min-height: 0; background: #202830; position: relative; overflow: hidden; }
.drawing { position: absolute; left: 0; top: 0; }
.vhead { position: relative; display: flex; justify-content: space-between; padding: 7px 9px 0 3px; color: #e2e8ec; font-weight: 600; }
.wins { display: flex; gap: 7px; }
.dimline { stroke: #d07a2a; fill: none; }
.footing { stroke: #a01fa8; stroke-width: 2; stroke-dasharray: 22 9; }
.outline { fill: none; stroke: #8d35c4; stroke-width: 2; stroke-dasharray: 22 9; stroke-dashoffset: 11; }
.outline.glow { stroke: #353a94; stroke-width: 5; }
.dimtext { fill: #f58a1f; font: bold 16px "Liberation Sans Narrow", "Liberation Sans", sans-serif; }
.cmd { height: 52px; flex: none; margin-top: 1px; border: 2px solid #5a5a5a; border-width: 2px 1px 1px 0; display: flex; font: 11px/14px "DejaVu Sans Mono", monospace; }
.grip { width: 21px; display: flex; flex-direction: column; align-items: center; gap: 6px; padding: 4px 0 0; background: linear-gradient(#666, #3c3c3c); }
.lines { flex: 1; display: flex; flex-direction: column; background: #c8c8c8; color: #222; }
.hist { height: 28px; padding: 11px 2px 0; border-bottom: 1px solid #999; }
.prompt { flex: 1; display: flex; align-items: center; gap: 6px; padding-left: 4px; background: #fff; }
.prompt input { border: 0; outline: 0; flex: 1; padding: 0; background: none; font-style: italic; }
.prompt input::placeholder { color: #888; opacity: 1; }
.rail { width: 11px; flex: none; border-left: 3px solid #5a5a5a; background: #858585; margin: 8px 0 2px; border-right: 1px solid #444; }

.status { height: 21px; flex: none; display: flex; justify-content: space-between; background: #353535; border-top: 1px solid #777; }
.sheets { display: flex; align-items: flex-start; padding-left: 10px; gap: 1px; }
.sheet { height: 16px; width: 54px; background: #4e4e4e; color: #bbb; border-radius: 0 0 6px 6px; clip-path: polygon(0 0, 100% 0, calc(100% - 6px) 100%, 6px 100%); }
.sheet:nth-child(2) { width: 109px; }
.sheet.on { background: linear-gradient(#666, #858585); color: #fff; font-weight: bold; }
.sheet.plus { width: 22px; font-size: 14px; font-weight: bold; }
.toggles { display: flex; background: #4b4b4b; color: #fff; }
.toggles button { height: 20px; display: flex; align-items: center; justify-content: center; }
.toggles .sep { border-left: 1px solid #727272; }
.model { width: 50px; border-left: 1px solid #727272; }
.st { width: 23px; } .sa { width: 15px; } .st.roomy { width: 25px; } .st.wide { width: 28px; } .st.last { width: 12px; }
.scale { width: 88px; gap: 5px; }
```
FILE: script.js
```js
// Small seeded generator so the hatch looks the same on every load.
let seed = 7;
const rnd = () => (seed = (seed * 16807) % 2147483647) / 2147483647;

// Concrete hatch: scattered aggregate between the two wall faces.
const wall = document.getElementById("concrete");
const NS = "http://www.w3.org/2000/svg";
for (let i = 0; i < 330; i++) {
  const p = document.createElementNS(NS, "path");
  const x = 788 + Math.floor(rnd() * 17), y = 173 + Math.floor(rnd() * 424);
  const big = rnd() < 0.25;
  p.setAttribute("d", big ? `M${x} ${y + 2}l2-2 1 3z` : `M${x} ${y}h1v1h-1z`);
  wall.appendChild(p);
}

// Coloured noise strip down the window edge, with ruled rows at the bottom.
const c = document.getElementById("edge").getContext("2d");
for (let y = 0; y < 575; y++) for (let x = 0; x < 6; x++) {
  const v = () => (rnd() < 0.6 ? 20 : Math.floor(rnd() * 210));
  c.fillStyle = `rgb(${v()},${v()},${v()})`;
  c.fillRect(x, y, 1, 1);
}
c.fillStyle = "#fff"; c.fillRect(0, 575, 6, 87);
c.fillStyle = "#e04a9a"; [575, 591, 607, 623].forEach(y => c.fillRect(0, y, 6, 2));
c.fillStyle = "#2020c0"; c.fillRect(0, 639, 6, 3);
c.fillStyle = "#c8f0b0"; c.fillRect(0, 646, 6, 16);
```
